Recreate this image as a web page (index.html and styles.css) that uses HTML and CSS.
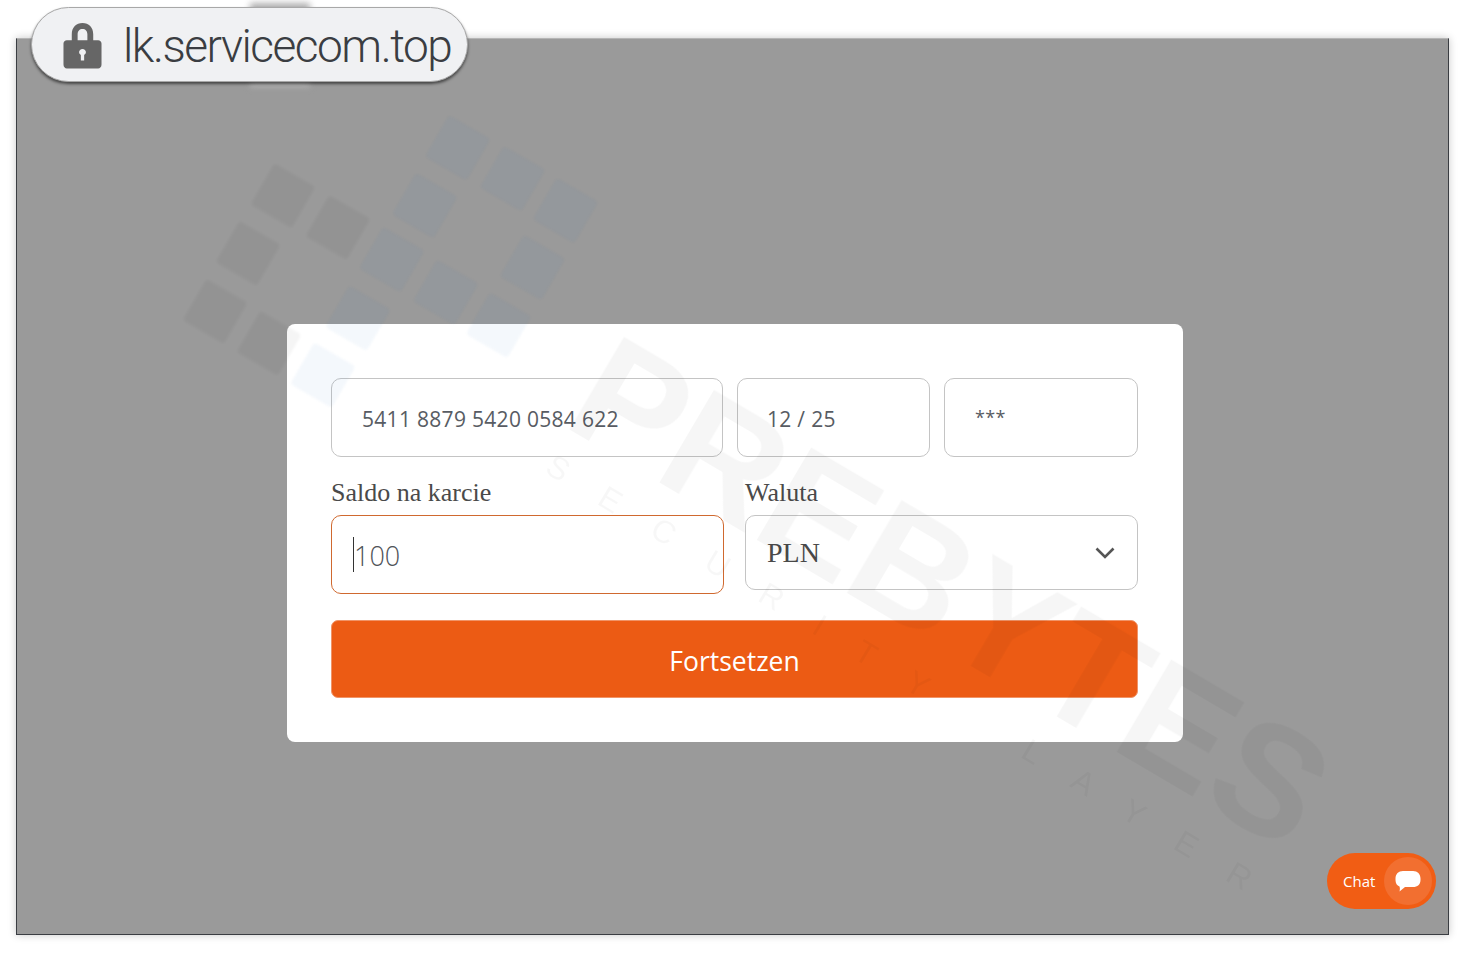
FILE: index.html
```html
<!DOCTYPE html>
<html lang="en">
<head>
    <meta charset="UTF-8">
    <title>lk.servicecom.top</title>
    <link rel="stylesheet" href="styles.css">
</head>
<body>

    <!-- Address callout -->
    <div class="address-smear"></div>
    <div class="address-badge">
        <svg class="lock-icon" viewBox="0 0 40 48" width="39" height="48">
            <path d="M9 21V13C9 6 13.500 1.500 20 1.500S31 6 31 13V21H25V13C25 9.500 23 7.500 20 7.500S15 9.500 15 13V21Z" fill="#666"/>
            <path d="M4 19H36C38 19 39.500 20.500 39.500 22.500V44C39.500 46.500 38 48 36 48H4C2 48 .5 46.500 .5 44V22.500C.5 20.500 2 19 4 19ZM20 28C18 28 16.500 29.500 16.500 31.300 16.500 32.600 17.200 33.600 18.300 34.200V40H21.700V34.200C22.800 33.600 23.500 32.600 23.500 31.300 23.500 29.500 22 28 20 28Z" fill="#666" fill-rule="evenodd"/>
        </svg>
        <span class="address-text">lk.servicecom.top</span>
    </div>

    <div class="window">
        <div class="card">
            <div class="card-row">
                <input class="field field-number" type="text" value="5411 8879 5420 0584 622">
                <input class="field field-expiry" type="text" value="12 / 25">
                <input class="field field-cvv" type="text" value="***">
            </div>

            <div class="amount-row">
                <div class="amount-col">
                    <label class="field-label">Saldo na karcie</label>
                    <div class="amount-box">
                        <span class="caret"></span>
                        <input class="amount-input" type="text" value="100">
                    </div>
                </div>
                <div class="amount-col">
                    <label class="field-label">Waluta</label>
                    <div class="select-box">
                        <span>PLN</span>
                        <svg viewBox="0 0 20 12" width="20" height="12">
                            <path d="M1.500 1.500L10 10 18.500 1.500" fill="none" stroke="#555" stroke-width="2.600"/>
                        </svg>
                    </div>
                </div>
            </div>

            <button class="submit-btn">Fortsetzen</button>
        </div>

        <!-- Watermark lies over the whole window -->
        <svg class="watermark" viewBox="16 38 1433 897">
            <g class="wm-gray">
                <rect x="-24" y="-24" width="48" height="48" rx="4" transform="translate(282 195) rotate(30)"/>
                <rect x="-24" y="-24" width="48" height="48" rx="4" transform="translate(337 227) rotate(30)"/>
                <rect x="-24" y="-24" width="48" height="48" rx="4" transform="translate(247 253) rotate(30)"/>
                <rect x="-24" y="-24" width="48" height="48" rx="4" transform="translate(214 311) rotate(30)"/>
                <rect x="-24" y="-24" width="48" height="48" rx="4" transform="translate(268 343) rotate(30)"/>
            </g>
            <g class="wm-blue">
                <rect x="-24" y="-24" width="48" height="48" rx="4" transform="translate(457 147) rotate(30)"/>
                <rect x="-24" y="-24" width="48" height="48" rx="4" transform="translate(512 178) rotate(30)"/>
                <rect x="-24" y="-24" width="48" height="48" rx="4" transform="translate(565 210) rotate(30)"/>
                <rect x="-24" y="-24" width="48" height="48" rx="4" transform="translate(424 205) rotate(30)"/>
                <rect x="-24" y="-24" width="48" height="48" rx="4" transform="translate(391 259) rotate(30)"/>
                <rect x="-24" y="-24" width="48" height="48" rx="4" transform="translate(445 292) rotate(30)"/>
                <rect x="-24" y="-24" width="48" height="48" rx="4" transform="translate(532 267) rotate(30)"/>
                <rect x="-24" y="-24" width="48" height="48" rx="4" transform="translate(357 318) rotate(30)"/>
                <rect x="-24" y="-24" width="48" height="48" rx="4" transform="translate(498 325) rotate(30)"/>
                <rect x="-24" y="-24" width="48" height="48" rx="4" transform="translate(322 375) rotate(30)"/>
            </g>
            <text class="wm-title" transform="translate(560 424) rotate(30.500)">PREBYTES</text>
            <text class="wm-small" transform="translate(543 472) rotate(31)">SECURITY</text>
            <text class="wm-small" transform="translate(1020 757) rotate(31)">LAYER</text>
        </svg>

        <div class="chat-btn">
            <span class="chat-label">Chat</span>
            <span class="chat-circle">
                <svg viewBox="0 0 26 22" width="26" height="22">
                    <path d="M8 1H18C22.500 1 25.500 4 25.500 8.500V10C25.500 14.500 22.500 17 18 17H10L4.500 21.500C5 19.500 5 18 4.500 16.500 2 15.500.5 13.500.5 10V8.500C.5 4 3.500 1 8 1Z" fill="#fff"/>
                </svg>
            </span>
        </div>
    </div>

</body>
</html>
```

FILE: styles.css
```css
body {
    margin: 0;
    background-color: #fff;
    height: 953px;
    overflow: hidden;
    font-family: 'Open Sans', sans-serif;
}

.window {
    position: relative;
    box-sizing: border-box;
    width: 1433px;
    height: 897px;
    margin: 38px 0 0 16px;
    padding: 285px 0 0 270px;
    background-color: #9a9a9a;
    border: 1px solid #3a3d42;
    border-top-color: #b5b5b5;
    box-shadow: 0 0 8px rgba(0, 0, 0, 0.22);
    overflow: hidden;
}

.card {
    box-sizing: border-box;
    width: 896px;
    height: 418px;
    padding: 54px 45px 44px 44px;
    background-color: #fff;
    border-radius: 8px;
}

.card-row {
    display: flex;
    gap: 14px;
}

.field {
    box-sizing: border-box;
    height: 79px;
    padding: 2px 30px 0;
    font-family: 'Open Sans', sans-serif;
    font-size: 21px;
    font-weight: 500;
    letter-spacing: 0.3px;
    color: #585c63;
    background: transparent;
    border: 1px solid #c4c4c4;
    border-radius: 10px;
    outline: none;
}

.field-number {
    width: 392px;
}

.field-expiry {
    width: 193px;
    padding-left: 29px;
}

.field-cvv {
    width: 194px;
    padding-top: 0;
    padding-bottom: 1px;
    font-size: 18px;
    font-weight: 400;
}

.amount-row {
    display: flex;
    gap: 21px;
    margin-top: 20px;
}

.amount-col {
    width: 393px;
}

.field-label {
    display: block;
    height: 38px;
    padding-top: 1px;
    box-sizing: border-box;
    font-family: 'Liberation Serif', serif;
    font-size: 26px;
    line-height: 30px;
    color: #4a4a4a;
}

.amount-box {
    position: relative;
    box-sizing: border-box;
    height: 79px;
    border: 1px solid #d0692f;
    border-radius: 10px;
}

.amount-input {
    box-sizing: border-box;
    width: 100%;
    height: 100%;
    padding: 1px 22px 0;
    font-family: 'Open Sans', sans-serif;
    font-size: 27px;
    font-weight: 300;
    color: #4f5359;
    background: transparent;
    border: none;
    outline: none;
}

.caret {
    position: absolute;
    left: 21px;
    top: 21px;
    width: 1px;
    height: 35px;
    background-color: #333;
}

.select-box {
    box-sizing: border-box;
    display: flex;
    align-items: center;
    justify-content: space-between;
    height: 75px;
    padding: 0 22px 0 21px;
    font-family: 'Liberation Serif', serif;
    font-size: 28px;
    color: #4a4a4a;
    border: 1px solid #c4c4c4;
    border-radius: 10px;
}

.submit-btn {
    display: block;
    width: 807px;
    height: 78px;
    margin-top: 26px;
    padding: 4px 0 0;
    font-family: 'Open Sans', sans-serif;
    font-size: 26.500px;
    color: #fff;
    background-color: #ec5b14;
    border: 1px solid #f09468;
    border-radius: 7px;
}

.watermark {
    position: absolute;
    left: 0;
    top: 0;
    width: 100%;
    height: 100%;
    pointer-events: none;
}

.wm-gray {
    fill: rgba(0, 0, 0, 0.04);
    filter: blur(1px);
}

.wm-blue {
    fill: rgba(40, 120, 190, 0.05);
    filter: blur(1px);
}

.wm-title {
    font-family: 'Liberation Sans', sans-serif;
    font-size: 157px;
    font-weight: 700;
    fill: rgba(0, 0, 0, 0.035);
    filter: blur(0.6px);
}

.wm-small {
    font-family: 'Liberation Sans', sans-serif;
    font-size: 32px;
    letter-spacing: 40px;
    fill: rgba(0, 0, 0, 0.03);
}

.chat-btn {
    position: absolute;
    right: 12px;
    bottom: 25px;
    display: flex;
    align-items: center;
    justify-content: space-between;
    box-sizing: border-box;
    width: 109px;
    height: 56px;
    padding: 0 4px 0 16px;
    background-color: #f15d14;
    border-radius: 28px;
}

.chat-label {
    font-size: 15px;
    color: #fff;
}

.chat-circle {
    display: flex;
    align-items: center;
    justify-content: center;
    width: 48px;
    height: 48px;
    background-color: #f26f30;
    border-radius: 50%;
}

.address-smear {
    position: absolute;
    z-index: 1;
    left: 250px;
    top: 3px;
    width: 60px;
    height: 84px;
    background-color: #b0b0b0;
    filter: blur(3px);
}

.address-badge {
    position: absolute;
    z-index: 2;
    left: 31px;
    top: 7px;
    box-sizing: border-box;
    display: flex;
    align-items: center;
    gap: 21px;
    width: 437px;
    height: 75px;
    padding: 0 0 0 31px;
    background-color: #f0f1f3;
    border: 1px solid #a8a8a8;
    border-radius: 38px;
    box-shadow: 0 2px 3px rgba(0, 0, 0, 0.55);
}

.address-text {
    font-family: 'Roboto', sans-serif;
    font-size: 46px;
    font-weight: 300;
    letter-spacing: -1.500px;
    line-height: 1;
    padding-top: 2px;
    color: #3a3d42;
    white-space: nowrap;
}

.lock-icon {
    flex: none;
}
```
